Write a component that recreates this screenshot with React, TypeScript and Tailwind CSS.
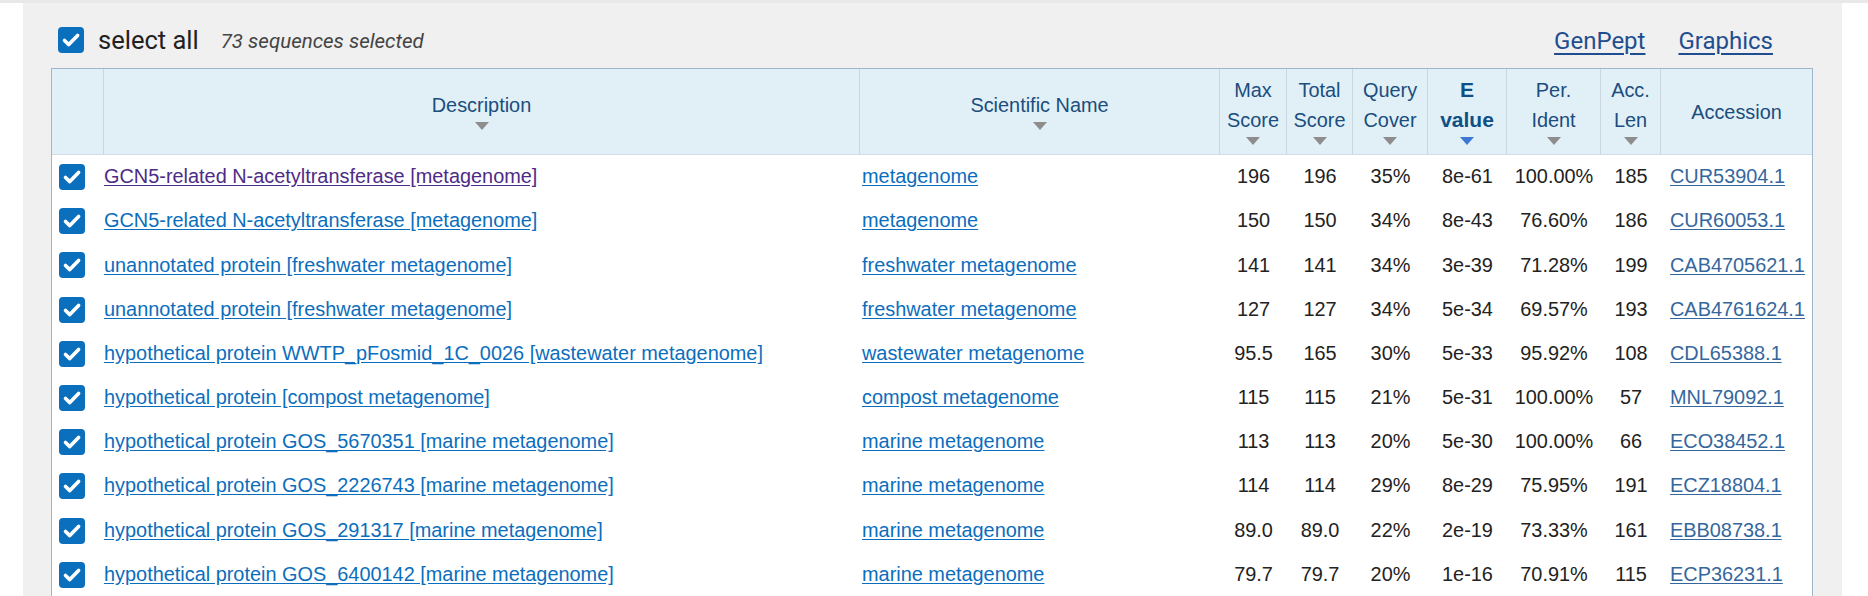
import React from "react";

type Row = {
  desc: string;
  sci: string;
  max: string;
  total: string;
  cover: string;
  e: string;
  ident: string;
  len: string;
  acc: string;
  visited?: boolean;
};

const rows: Row[] = [
  { desc: "GCN5-related N-acetyltransferase [metagenome]", sci: "metagenome", max: "196", total: "196", cover: "35%", e: "8e-61", ident: "100.00%", len: "185", acc: "CUR53904.1", visited: true },
  { desc: "GCN5-related N-acetyltransferase [metagenome]", sci: "metagenome", max: "150", total: "150", cover: "34%", e: "8e-43", ident: "76.60%", len: "186", acc: "CUR60053.1" },
  { desc: "unannotated protein [freshwater metagenome]", sci: "freshwater metagenome", max: "141", total: "141", cover: "34%", e: "3e-39", ident: "71.28%", len: "199", acc: "CAB4705621.1" },
  { desc: "unannotated protein [freshwater metagenome]", sci: "freshwater metagenome", max: "127", total: "127", cover: "34%", e: "5e-34", ident: "69.57%", len: "193", acc: "CAB4761624.1" },
  { desc: "hypothetical protein WWTP_pFosmid_1C_0026 [wastewater metagenome]", sci: "wastewater metagenome", max: "95.5", total: "165", cover: "30%", e: "5e-33", ident: "95.92%", len: "108", acc: "CDL65388.1" },
  { desc: "hypothetical protein [compost metagenome]", sci: "compost metagenome", max: "115", total: "115", cover: "21%", e: "5e-31", ident: "100.00%", len: "57", acc: "MNL79092.1" },
  { desc: "hypothetical protein GOS_5670351 [marine metagenome]", sci: "marine metagenome", max: "113", total: "113", cover: "20%", e: "5e-30", ident: "100.00%", len: "66", acc: "ECO38452.1" },
  { desc: "hypothetical protein GOS_2226743 [marine metagenome]", sci: "marine metagenome", max: "114", total: "114", cover: "29%", e: "8e-29", ident: "75.95%", len: "191", acc: "ECZ18804.1" },
  { desc: "hypothetical protein GOS_291317 [marine metagenome]", sci: "marine metagenome", max: "89.0", total: "89.0", cover: "22%", e: "2e-19", ident: "73.33%", len: "161", acc: "EBB08738.1" },
  { desc: "hypothetical protein GOS_6400142 [marine metagenome]", sci: "marine metagenome", max: "79.7", total: "79.7", cover: "20%", e: "1e-16", ident: "70.91%", len: "115", acc: "ECP36231.1" },
];

function Check() {
  return (
    <span className="flex h-[26px] w-[26px] shrink-0 items-center justify-center rounded-[4px] bg-[#0a6fbd]">
      <svg width="26" height="26" viewBox="0 0 26 26">
        <path d="M6.5 13.5 L10.8 17.6 L19.6 8.4" stroke="white" strokeWidth="3.6" fill="none" strokeLinecap="round" strokeLinejoin="round" />
      </svg>
    </span>
  );
}

function Tri({ blue }: { blue?: boolean }) {
  return (
    <div className="flex h-[14px] justify-center pt-[2px]">
      <svg width="14" height="8" viewBox="0 0 14 8">
        <polygon points="0,0 14,0 7,8" fill={blue ? "#3d78d6" : "#8d8d8d"} />
      </svg>
    </div>
  );
}

function HeadCell({ lines, tri = true, bold, blue, last }: { lines: string[]; tri?: boolean; bold?: boolean; blue?: boolean; last?: boolean }) {
  return (
    <div className={`flex h-full flex-col items-center justify-center ${last ? "" : "border-r border-[#cbd7de]"}`}>
      {lines.map((l) => (
        <div key={l} className={`leading-[30px] ${bold ? "text-[21px] font-bold text-[#0e4f86]" : "text-[#1b4d7e]"}`}>
          {l}
        </div>
      ))}
      {tri && <Tri blue={blue} />}
    </div>
  );
}

export default function App() {
  return (
    <div className="min-h-[596px] w-[1868px] overflow-hidden border-t-[3px] border-[#e6e9e7] bg-white">
      <div className="ml-[23px] w-[1819px] bg-[#f0f0f0] px-[28px] pt-[24px]">
        <div className="flex h-[26px] items-center" style={{ fontFamily: "Roboto, 'Liberation Sans', sans-serif" }}>
          <div className="ml-[7px]">
            <Check />
          </div>
          <span className="ml-[14px] text-[25.5px] text-[#222]">select all</span>
          <span className="ml-[22px] pt-[3px] text-[20.5px] italic text-[#444]">73 sequences selected</span>
          <div className="ml-auto mr-[41px] flex gap-[33px] pt-[2px] text-[24px] text-[#1f4d8f]">
            <a className="underline underline-offset-[4px] decoration-[2px]">GenPept</a>
            <a className="underline underline-offset-[4px] decoration-[2px]">Graphics</a>
          </div>
        </div>

        <div
          className="mt-[15px] w-[1762px] border-x border-t border-[#9fb6cd] bg-white text-[19.9px]"
          style={{ fontFamily: "'Liberation Sans', Arial, sans-serif" }}
        >
          <div className="grid h-[86px] grid-cols-[52px_756px_360px_67px_66px_75px_79px_94px_60px_151px] border-b border-[#d2dee6] bg-[#e1f0f7]">
            <div className="h-full border-r border-[#cbd7de]" />
            <HeadCell lines={["Description"]} />
            <HeadCell lines={["Scientific Name"]} />
            <HeadCell lines={["Max", "Score"]} />
            <HeadCell lines={["Total", "Score"]} />
            <HeadCell lines={["Query", "Cover"]} />
            <HeadCell lines={["E", "value"]} bold blue />
            <HeadCell lines={["Per.", "Ident"]} />
            <HeadCell lines={["Acc.", "Len"]} />
            <HeadCell lines={["Accession"]} tri={false} last />
          </div>

          {rows.map((r, i) => (
            <div
              key={i}
              className="grid h-[44.2px] grid-cols-[52px_756px_360px_67px_66px_75px_79px_94px_60px_151px] items-center text-[#222]"
            >
              <div className="pl-[7px]">
                <Check />
              </div>
              <div className="whitespace-nowrap">
                <a className={`underline underline-offset-[2px] ${r.visited ? "text-[#4e2b86]" : "text-[#0b6ebd]"}`}>{r.desc}</a>
              </div>
              <div className="whitespace-nowrap pl-[2px]">
                <a className="text-[#0b6ebd] underline underline-offset-[2px]">{r.sci}</a>
              </div>
              <div className="text-center">{r.max}</div>
              <div className="text-center">{r.total}</div>
              <div className="text-center">{r.cover}</div>
              <div className="text-center">{r.e}</div>
              <div className="text-center">{r.ident}</div>
              <div className="text-center">{r.len}</div>
              <div className="whitespace-nowrap pl-[9px]">
                <a className="text-[#35679d] underline underline-offset-[2px]">{r.acc}</a>
              </div>
            </div>
          ))}
        </div>
      </div>
    </div>
  );
}
